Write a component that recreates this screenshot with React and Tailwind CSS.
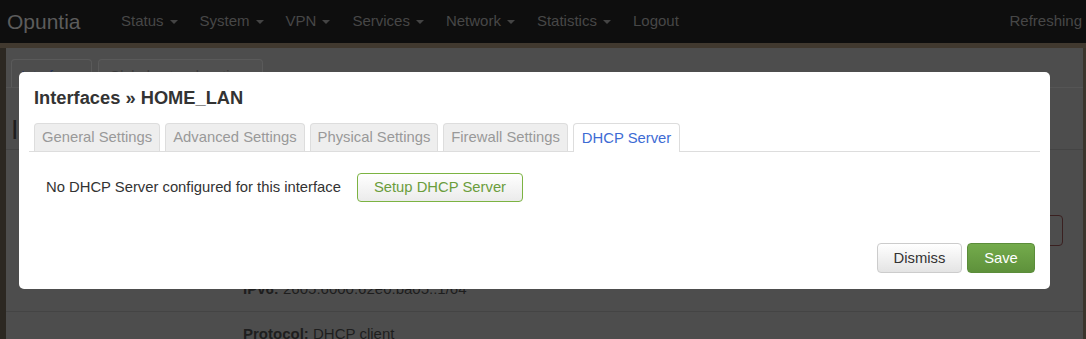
import React from 'react'

const navItems = ['Status', 'System', 'VPN', 'Services', 'Network', 'Statistics']

const tabs = [
  { label: 'General Settings' },
  { label: 'Advanced Settings' },
  { label: 'Physical Settings' },
  { label: 'Firewall Settings' },
  { label: 'DHCP Server', active: true },
]

const Caret = () => (
  <span className="inline-block ml-[6px] align-middle w-0 h-0 border-l-[4px] border-r-[4px] border-t-[4px] border-l-transparent border-r-transparent border-t-[#444]" />
)

const App = () => {
  return (
    <div className="relative w-[1086px] h-[339px] overflow-hidden bg-[#4d4d4d] font-['Liberation_Sans',Arial,sans-serif]">
      {/* navbar (dimmed by the modal backdrop) */}
      <div className="h-[43px] bg-[#0e0e0e] flex items-center">
        <div className="w-[110px] pl-[7px] text-[21px] text-[#5c5c5c]">Opuntia</div>
        {navItems.map((item) => (
          <div key={item} className="px-[11px] text-[15px] text-[#474747] whitespace-nowrap">
            {item}
            <Caret />
          </div>
        ))}
        <div className="px-[11px] text-[15px] text-[#474747]">Logout</div>
        <div className="ml-auto pr-[4px] text-[15px] text-[#474747] whitespace-nowrap">Refreshing</div>
      </div>
      <div className="h-[5px] bg-[#41392f]" />

      {/* page behind the modal */}
      <div className="flex h-[291px]">
        <div className="w-[6px] bg-[#2c2822]" />
        <div className="flex-1 bg-[#4d4d4d] flex flex-col">
          <div className="h-[40px] shrink-0 flex items-end gap-[6px] pl-[5px] border-b border-[#555]">
            <div className="h-[28px] px-[9px] pt-[6px] border border-b-0 border-[#5a5a5a] rounded-t-[4px] text-[14px] text-[#23335a]">Interfaces</div>
            <div className="h-[28px] px-[10px] pt-[6px] border border-b-0 border-[#5a5a5a] rounded-t-[4px] bg-[#505050] text-[14px] text-[#3a3a3a]">Global network options</div>
          </div>
          <div className="h-[62px] shrink-0 pt-[27px] pl-[5px] text-[27px] leading-[30px] text-[#1e1e1e] border-b border-[#444]">Interfaces</div>
          <div className="h-[130px] shrink-0 flex items-start justify-end pt-[65px] pr-[20px]">
            <div className="w-[60px] h-[31px] border border-[#3a2020] rounded-[4px]" />
          </div>
          <div className="h-[32px] shrink-0 flex items-start pl-[237px] text-[15px] leading-[18px] text-[#1e1e1e] border-b border-[#444]">
            <span className="font-bold">IPv6:</span>&nbsp;2605:6000:62e0:ba05::1/64
          </div>
          <div className="pt-[11px] pl-[237px] text-[15px] text-[#1e1e1e] whitespace-nowrap">
            <span className="font-bold">Protocol:</span> DHCP client
          </div>
        </div>
        <div className="w-[3px] bg-[#3b352c]" />
      </div>

      {/* modal */}
      <div className="absolute left-[19px] top-[72px] w-[1031px] h-[217px] bg-white rounded-[5px] flex flex-col">
        <div className="px-[15px] pt-[15px] text-[18.3px] font-bold text-[#333] leading-[22px]">Interfaces » HOME_LAN</div>
        <div className="mx-[10px] mt-[14px] flex items-end gap-[5px] pl-[5px] border-b border-[#dddddd]">
          {tabs.map((t) => (
            <div
              key={t.label}
              className={
                t.active
                  ? 'h-[29px] -mb-px px-[8px] flex items-center border border-b-0 border-[#dddddd] rounded-t-[4px] bg-white text-[14.8px] text-[#3d6bd4] whitespace-nowrap'
                  : 'h-[28px] px-[7px] flex items-center border border-b-0 border-[#dddddd] rounded-t-[4px] bg-[#eeeeee] text-[14.8px] text-[#999999] whitespace-nowrap'
              }
            >
              {t.label}
            </div>
          ))}
        </div>
        <div className="flex items-center pl-[27px] mt-[21px] gap-[16px]">
          <span className="text-[14.8px] text-[#333]">No DHCP Server configured for this interface</span>
          <button className="w-[166px] h-[29px] border border-[#7cb342] rounded-[4px] bg-gradient-to-b from-white to-[#ebebeb] text-[14.8px] text-[#6b9d3c]">
            Setup DHCP Server
          </button>
        </div>
        <div className="mt-auto flex justify-end gap-[5px] px-[15px] pb-[16px]">
          <button className="w-[85px] h-[30px] border border-[#cccccc] rounded-[4px] bg-gradient-to-b from-white to-[#e4e4e4] text-[14.8px] text-[#333]">
            Dismiss
          </button>
          <button className="w-[68px] h-[30px] border border-[#5b8d3a] rounded-[4px] bg-gradient-to-b from-[#74ab4c] to-[#5e913b] text-[14.8px] text-white">
            Save
          </button>
        </div>
      </div>
    </div>
  )
}

export default App
